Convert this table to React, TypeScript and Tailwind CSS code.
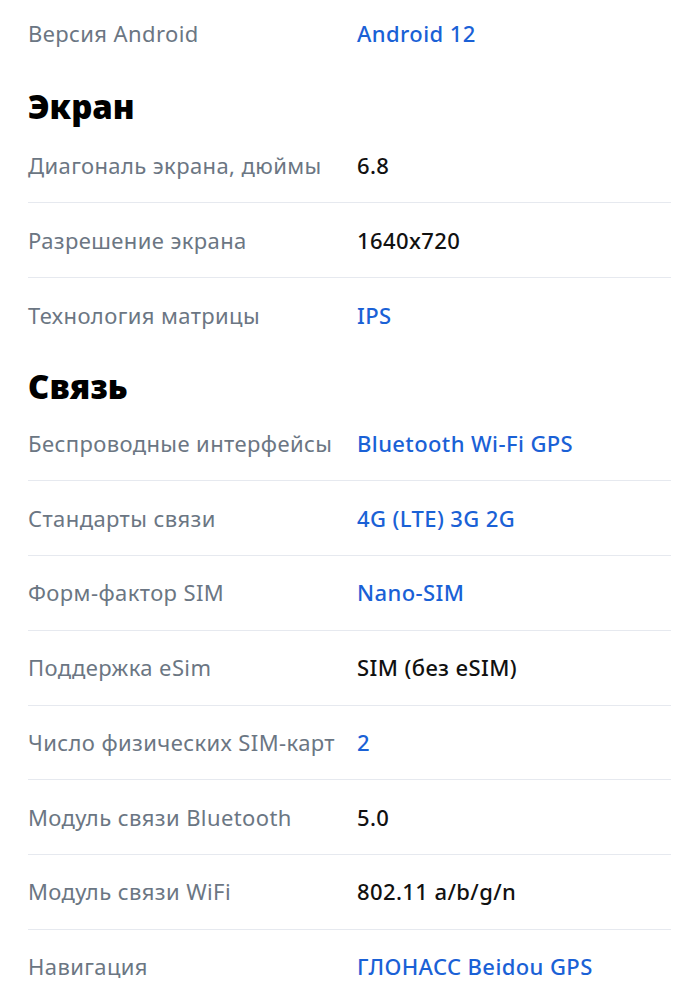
type Spec = { label: string; value: string; link?: boolean }

const SECTIONS: { title?: string; pad?: string; rows: Spec[] }[] = [
  { rows: [{ label: 'Версия Android', value: 'Android 12', link: true }] },
  {
    title: 'Экран',
    pad: 'pt-[19px] pb-[5px]',
    rows: [
      { label: 'Диагональ экрана, дюймы', value: '6.8' },
      { label: 'Разрешение экрана', value: '1640x720' },
      { label: 'Технология матрицы', value: 'IPS', link: true },
    ],
  },
  {
    title: 'Связь',
    pad: 'pt-[17px] pb-[3px]',
    rows: [
      { label: 'Беспроводные интерфейсы', value: 'Bluetooth Wi-Fi GPS', link: true },
      { label: 'Стандарты связи', value: '4G (LTE) 3G 2G', link: true },
      { label: 'Форм-фактор SIM', value: 'Nano-SIM', link: true },
      { label: 'Поддержка eSim', value: 'SIM (без eSIM)' },
      { label: 'Число физических SIM-карт', value: '2', link: true },
      { label: 'Модуль связи Bluetooth', value: '5.0' },
      { label: 'Модуль связи WiFi', value: '802.11 a/b/g/n' },
      { label: 'Навигация', value: 'ГЛОНАСС Beidou GPS', link: true },
    ],
  },
]

function SpecRow({ spec, last }: { spec: Spec; last: boolean }) {
  return (
    <div
      className={`flex items-center h-[74.7px] ${last ? '' : 'border-b border-[#e6e9ef]'}`}
    >
      <span className="w-[329px] shrink-0 text-[22px] tracking-[0.4px] text-[#6b7683] whitespace-nowrap">
        {spec.label}
      </span>
      <span
        className={`text-[22px] tracking-[0.4px] font-medium whitespace-nowrap ${
          spec.link ? 'text-[#1a61d6]' : 'text-[#111111]'
        }`}
      >
        {spec.value}
      </span>
    </div>
  )
}

export default function App() {
  return (
    <div className="w-[699px] h-[1000px] overflow-hidden bg-white px-[28px] font-['Noto_Sans',sans-serif]">
      <div className="-mt-[4px]">
        {SECTIONS.map((section, i) => (
          <div key={i}>
            {section.title && (
              <h2 className={`${section.pad} text-[33px] leading-[34px] font-black text-black`}>
                {section.title}
              </h2>
            )}
            {section.rows.map((spec, j) => (
              <SpecRow key={spec.label} spec={spec} last={j === section.rows.length - 1} />
            ))}
          </div>
        ))}
      </div>
    </div>
  )
}
